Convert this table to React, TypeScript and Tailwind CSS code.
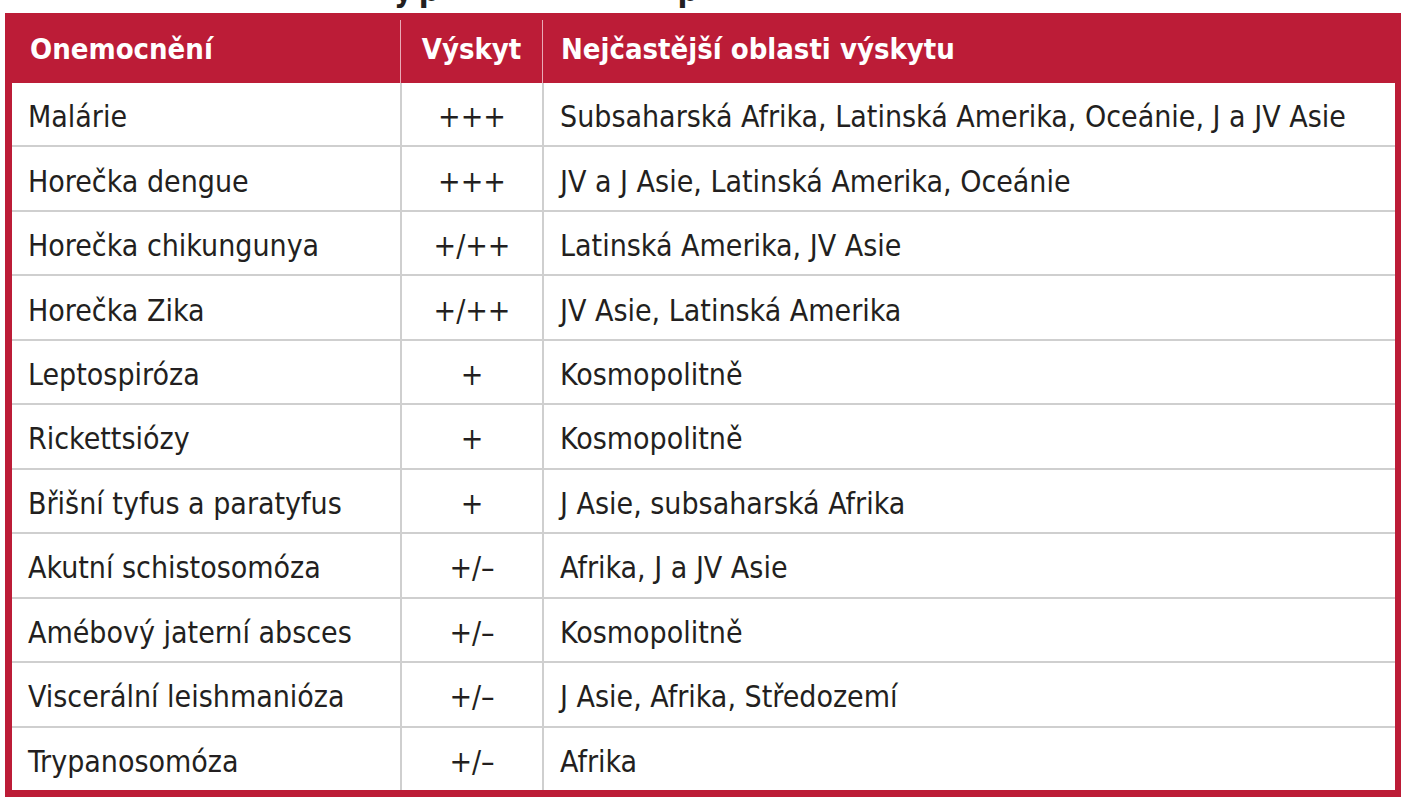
const rows: [string, string, string][] = [
  ['Malárie', '+++', 'Subsaharská Afrika, Latinská Amerika, Oceánie, J a JV Asie'],
  ['Horečka dengue', '+++', 'JV a J Asie, Latinská Amerika, Oceánie'],
  ['Horečka chikungunya', '+/++', 'Latinská Amerika, JV Asie'],
  ['Horečka Zika', '+/++', 'JV Asie, Latinská Amerika'],
  ['Leptospiróza', '+', 'Kosmopolitně'],
  ['Rickettsiózy', '+', 'Kosmopolitně'],
  ['Břišní tyfus a paratyfus', '+', 'J Asie, subsaharská Afrika'],
  ['Akutní schistosomóza', '+/–', 'Afrika, J a JV Asie'],
  ['Amébový jaterní absces', '+/–', 'Kosmopolitně'],
  ['Viscerální leishmanióza', '+/–', 'J Asie, Afrika, Středozemí'],
  ['Trypanosomóza', '+/–', 'Afrika'],
];

const font = {
  fontFamily: '"Liberation Sans Narrow", "DejaVu Sans Condensed", "Liberation Sans", sans-serif',
};

export default function App() {
  return (
    <div className="w-[1416px] h-[800px] bg-white overflow-hidden" style={font}>
      {/* title of the table, scrolled almost out of view */}
      <div className="h-[13px] overflow-hidden">
        <div className="flex -mt-[26px] text-[32px] font-bold text-[#231f20] leading-[32px]">
          <span className="ml-[394px]">y</span>
          <span className="ml-[6px]">p</span>
          <span className="ml-[238px]">p</span>
        </div>
      </div>

      <div className="ml-[5px] w-[1396px] h-[784px] bg-[#bc1c37] pl-[7px] pr-[6px] pb-[7px] flex flex-col">
        <div className="h-[70px] flex text-white font-bold text-[29px]">
          <div className="w-[388px] flex items-center pl-[18px] pt-[4px]">Onemocnění</div>
          <div className="w-[142px] flex items-center justify-center border-l border-[#e9aab6] mt-[7px] pt-[4px] pb-[7px]">
            Výskyt
          </div>
          <div className="flex-1 flex items-center pl-[18px] border-l border-[#e9aab6] mt-[7px] pt-[4px] pb-[7px]">
            Nejčastější oblasti výskytu
          </div>
        </div>
        <div className="flex-1 bg-white flex flex-col text-[30px] text-[#231f20]">
          {rows.map(([name, occ, area], i) => (
            <div
              key={name}
              className={`flex-1 flex pt-[5px] ${i > 0 ? 'border-t-2 border-[#cfcfcf]' : ''}`}
            >
              <div className="w-[388px] flex items-center pl-[16px]">{name}</div>
              <div className="w-[142px] flex items-center justify-center border-l-2 border-[#cfcfcf] -mt-[5px] pt-[5px]">
                {occ}
              </div>
              <div className="flex-1 flex items-center pl-[16px] border-l-2 border-[#cfcfcf] -mt-[5px] pt-[5px]">
                {area}
              </div>
            </div>
          ))}
        </div>
      </div>
    </div>
  );
}
